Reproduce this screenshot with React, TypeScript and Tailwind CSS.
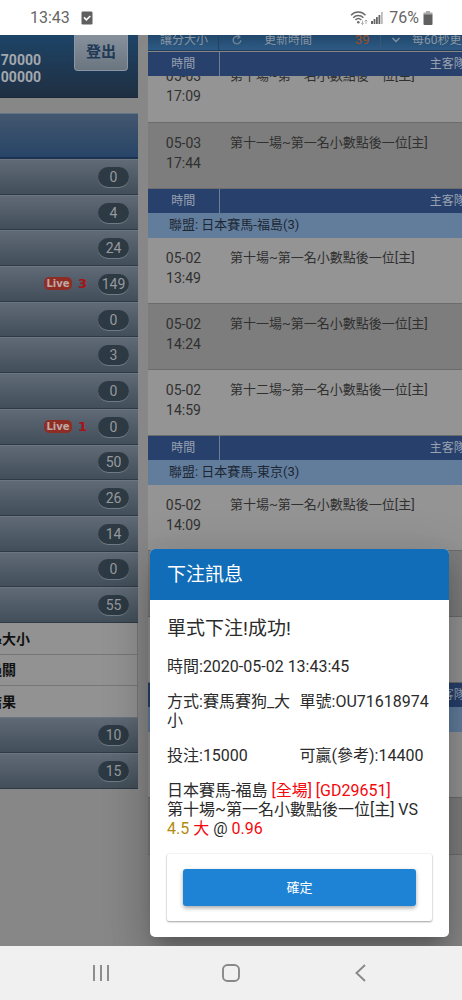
import { Fragment } from "react";

type MenuItem = { count: number; live?: number };
type Row = { date?: string; time?: string; teams?: string; short?: boolean };
type Group = { league: string; rows: Row[] };

const menuTop: MenuItem[] = [
  { count: 0 },
  { count: 4 },
  { count: 24 },
  { count: 149, live: 3 },
  { count: 0 },
  { count: 3 },
  { count: 0 },
  { count: 0, live: 1 },
  { count: 50 },
  { count: 26 },
  { count: 14 },
  { count: 0 },
  { count: 55 },
];
const menuBottom: MenuItem[] = [{ count: 10 }, { count: 15 }];

const firstRows: Row[] = [
  { date: "05-03", time: "17:09", teams: "第十場~第一名小數點後一位[主]" },
  { date: "05-03", time: "17:44", teams: "第十一場~第一名小數點後一位[主]" },
];

const groups: Group[] = [
  {
    league: "聯盟: 日本賽馬-福島(3)",
    rows: [
      { date: "05-02", time: "13:49", teams: "第十場~第一名小數點後一位[主]" },
      { date: "05-02", time: "14:24", teams: "第十一場~第一名小數點後一位[主]" },
      { date: "05-02", time: "14:59", teams: "第十二場~第一名小數點後一位[主]" },
    ],
  },
  {
    league: "聯盟: 日本賽馬-東京(3)",
    rows: [
      { date: "05-02", time: "14:09", teams: "第十場~第一名小數點後一位[主]" },
      {},
      {},
    ],
  },
  { league: "", rows: [{}, { short: true }] },
];

function MenuRow({ item }: { item: MenuItem }) {
  return (
    <li className="flex flex-1 items-center justify-end border-b border-[#2e3a46] border-t border-t-[#6b7580] bg-linear-to-b from-[#5f6a76] to-[#424e59] pr-[9px]">
      {item.live !== undefined && (
        <span className="mr-[11px] flex items-center gap-[6px] font-['DejaVu_Sans',sans-serif] font-bold">
          <span className="flex h-[13px] w-7 items-center justify-center rounded-[5px] bg-[#8f2d24] text-[10px] leading-none text-[#bfaaa7]">
            Live
          </span>
          <span className="text-[13px] leading-none text-[#a81116]">{item.live}</span>
        </span>
      )}
      <span className="flex h-5 w-[31px] items-center justify-center rounded-full bg-[#2d3943] text-sm leading-none text-[#969a9e] shadow-[0_1px_0_#6f7a84]">
        {item.count}
      </span>
    </li>
  );
}

function Columns() {
  return (
    <colgroup>
      <col className="w-[71px]" />
      <col />
    </colgroup>
  );
}

function HeadRow() {
  return (
    <tr className="h-6 bg-[#27406c] text-xs text-[#9aa3b1]">
      <th className="border-r border-[#6f7d94] p-0 font-normal">時間</th>
      <th className="p-0 font-normal">主客隊伍</th>
    </tr>
  );
}

function EventRow({ row, odd }: { row: Row; odd: boolean }) {
  const tone = odd ? "bg-[#7d7d7d]" : "bg-[#949494]";
  const height = row.short ? "h-[57px]" : "h-[66px]";
  return (
    <tr className={`${height} ${tone} border-b border-[#6c6c6c] align-top text-[#303030]`}>
      <td className="p-0 pt-[10px] text-center text-sm leading-5">
        {row.date}
        <br />
        {row.time}
      </td>
      <td className="p-0 pl-[11px] pt-[10px] text-[13px] leading-5">{row.teams}</td>
    </tr>
  );
}

function StatusBar() {
  return (
    <header className="flex h-[35px] shrink-0 items-center bg-white pl-[30px] pr-[29px] text-base text-[#666]">
      <span>13:43</span>
      <svg className="ml-[11px] h-[14px] w-[12px]" viewBox="0 0 12 14" aria-hidden="true">
        <rect x="0.5" y="0.5" width="11" height="13" rx="1.3" fill="#606060" />
        <path d="M3 6.4l2.4 2.4L9.3 5" fill="none" stroke="#fff" strokeWidth="1.6" />
      </svg>
      <span className="flex-1" />
      <svg className="h-[16px] w-[18px]" viewBox="0 0 18 16" fill="none" stroke="#6a6a6a" strokeWidth="1.4" aria-hidden="true">
        <path d="M1 5.2C5 1 11.500 1 15.500 5.200" />
        <path d="M3.200 7.700c3-3 7.200-3 10.200 0" />
        <path d="M5.400 10c1.700-1.700 4.200-1.700 5.900 0" />
        <circle cx="8.300" cy="12.300" r="1.300" fill="#6a6a6a" stroke="none" />
        <path d="M12.500 10.500v4m-1.300-1.300l1.300 1.300 1.300-1.300M16 14v-4m-1.300 1.300L16 10l1.300 1.300" stroke="#999" strokeWidth="0.800" />
      </svg>
      <svg className="ml-[3px] mr-[6px] h-[13px] w-[12px]" viewBox="0 0 12 13" fill="#666" aria-hidden="true">
        <path d="M0 10h2v3H0zM2.600 8h1.800v5H2.600zM5 6h1.800v7H5zM7.500 4h1.800v9H7.500z" />
        <path d="M10 1h1.800v12H10z" fill="#bbb" />
      </svg>
      <span>76%</span>
      <svg className="ml-[4px] h-[14px] w-[10px]" viewBox="0 0 10 14" aria-hidden="true">
        <path d="M3 0h4v1.500h2.500V4h-9V1.500H3z" fill="#aaa" />
        <path d="M0.500 3.500h9V13q0 1-1 1h-7q-1 0-1-1z" fill="#606060" />
      </svg>
    </header>
  );
}

function Sidebar() {
  return (
    <aside className="w-[138px] shrink-0">
      <div className="flex h-[63px] items-start justify-between overflow-hidden border-b border-[#1b2938] bg-linear-to-b from-[#1d4467] to-[#1f2f42] pr-[10px]">
        <div className="flex w-[41px] flex-col items-end pt-[17px] text-sm font-bold leading-[17px] text-[#a3a8ad]">
          <span>70000</span>
          <span>00000</span>
        </div>
        <button className="h-9 w-[54px] rounded-b-sm border border-t-0 border-[#8a96a3] bg-linear-to-b from-[#87919d] to-[#6b7580] text-[15px] font-bold text-[#203a56]">
          登出
        </button>
      </div>
      <div className="mt-[15px] h-[46px] border-b-2 border-t border-b-[#1b3350] border-t-[#60758a] bg-linear-to-b from-[#43576f] to-[#274467]" />
      <ul className="flex h-[464px] flex-col">
        {menuTop.map((item, i) => (
          <MenuRow key={i} item={item} />
        ))}
      </ul>
      <ul className="border-r border-[#777] text-sm font-bold text-[#111]">
        <li className="flex h-8 items-center border-b border-[#777] bg-[#929292]">
          <span className="flex w-[30px] justify-end whitespace-nowrap">&amp;大小</span>
        </li>
        <li className="flex h-[31px] items-center border-b border-[#777] bg-[#929292]">
          <span className="flex w-4 justify-end whitespace-nowrap">過關</span>
        </li>
        <li className="flex h-[31px] items-center bg-[#929292]">
          <span className="flex w-4 justify-end whitespace-nowrap">結果</span>
        </li>
      </ul>
      <ul className="flex h-[72px] flex-col">
        {menuBottom.map((item, i) => (
          <MenuRow key={i} item={item} />
        ))}
      </ul>
    </aside>
  );
}

function Odds() {
  return (
    <section className="min-w-0 flex-1 overflow-hidden">
      <div className="relative z-10">
        <div className="flex h-4 items-end overflow-hidden border-b border-[#1f3b5c] bg-linear-to-b from-[#22486b] to-[#2d5a85] text-xs leading-5 text-[#8896a3]">
          <span className="w-[71px] shrink-0 border-r border-[#24405e] pl-3">讓分大小</span>
          <svg className="mb-[5px] ml-[13px] mr-[22px] h-[10px] w-[10px] shrink-0" viewBox="0 0 10 10" fill="none" stroke="#6f8496" strokeWidth="1.400" aria-hidden="true">
            <path d="M8.800 5.300A3.800 3.800 0 1 1 6.500 1.600M6 0l1.800 2L5.500 3.700" />
          </svg>
          <span className="shrink-0">更新時間</span>
          <span className="ml-[43px] w-[26px] shrink-0 border-r border-[#345878] text-[13px] text-[#9a4f27]">39</span>
          <svg className="mb-[7px] ml-[11px] mr-3 h-[6px] w-[8px] shrink-0" viewBox="0 0 8 6" fill="none" stroke="#7d93a6" strokeWidth="1.400" aria-hidden="true">
            <path d="M0.500 1L4 4.500 7.500 1" />
          </svg>
          <select aria-label="更新頻率" className="h-5 w-20 shrink-0 appearance-none bg-transparent p-0 text-xs leading-5">
            <option>每60秒更新</option>
          </select>
        </div>
        <table className="mt-px w-[540px] table-fixed border-collapse">
          <Columns />
          <thead>
            <HeadRow />
          </thead>
        </table>
      </div>
      <div className="overflow-hidden">
        <table className="-mt-5 w-[540px] table-fixed border-collapse">
          <Columns />
          <tbody>
            {firstRows.map((row, i) => (
              <EventRow key={i} row={row} odd={i % 2 === 1} />
            ))}
          </tbody>
        </table>
      </div>
      <table className="w-[540px] table-fixed border-collapse">
        <Columns />
        <tbody>
          {groups.map((group, g) => (
            <Fragment key={g}>
              <HeadRow />
              <tr className="h-[25px] bg-[#627c9c] text-[13px] text-[#1c2733]">
                <td colSpan={2} className="p-0 pl-[21px] leading-6">
                  {group.league}
                </td>
              </tr>
              {group.rows.map((row, i) => (
                <EventRow key={i} row={row} odd={i % 2 === 1} />
              ))}
            </Fragment>
          ))}
        </tbody>
      </table>
    </section>
  );
}

function BetDialog() {
  return (
    <div className="absolute inset-0 z-20 flex items-end pb-[9px] pl-[150px] pr-[13px]">
      <div
        role="dialog"
        aria-labelledby="bet-title"
        className="w-full overflow-hidden rounded-[5px] bg-white text-base leading-[19px] text-[#2b2b2b] shadow-[0_11px_15px_-7px_rgba(0,0,0,0.2),0_24px_38px_3px_rgba(0,0,0,0.14),0_9px_46px_8px_rgba(0,0,0,0.12)]"
      >
        <h2 id="bet-title" className="flex h-[51px] items-center bg-[#116db7] px-[17px] text-[19px] text-white">
          下注訊息
        </h2>
        <div className="flex flex-col gap-4 px-[17px] pb-4 pt-[17px]">
          <h3 className="text-[19px] leading-6">單式下注!成功!</h3>
          <p>時間:2020-05-02 13:43:45</p>
          <div className="grid grid-cols-2">
            <p>方式:賽馬賽狗_大小</p>
            <p>單號:OU71618974</p>
          </div>
          <div className="grid grid-cols-2">
            <p>投注:15000</p>
            <p>可贏(參考):14400</p>
          </div>
          <p className="whitespace-nowrap">
            日本賽馬-福島 <span className="text-[#f5070c]">[全場] [GD29651]</span>
            <br />
            第十場~第一名小數點後一位[主] VS
            <br />
            <span className="text-[#b28a0e]">4.5</span> <span className="text-[#f5070c]">大</span> @{" "}
            <span className="text-[#f5070c]">0.96</span>
          </p>
          <div className="rounded-xs px-4 py-[15px] shadow-[0_1px_2px_rgba(0,0,0,0.35),0_0_2px_rgba(0,0,0,0.12)]">
            <button className="h-[37px] w-full rounded-[3px] bg-[#1f83d5] text-[13px] text-white shadow-[0_2px_4px_rgba(0,0,0,0.35)]">
              確定
            </button>
          </div>
        </div>
      </div>
    </div>
  );
}

function NavBar() {
  return (
    <nav className="flex h-[54px] shrink-0 items-center justify-around bg-[#f0f0f0] px-9 text-[#888]">
      <button aria-label="最近" className="flex w-5 justify-center">
        <svg className="h-5 w-5" viewBox="0 0 20 20" fill="none" stroke="currentColor" strokeWidth="1.900" aria-hidden="true">
          <path d="M3 2v16M10 2v16M17 2v16" />
        </svg>
      </button>
      <button aria-label="主畫面" className="flex w-5 justify-center">
        <svg className="h-5 w-5" viewBox="0 0 20 20" fill="none" stroke="currentColor" strokeWidth="1.900" aria-hidden="true">
          <rect x="2" y="2" width="16" height="16" rx="4.500" />
        </svg>
      </button>
      <button aria-label="返回" className="flex w-5 justify-center">
        <svg className="h-5 w-5" viewBox="0 0 20 20" fill="none" stroke="currentColor" strokeWidth="1.900" aria-hidden="true">
          <path d="M14 2L5.500 10l8.500 8" />
        </svg>
      </button>
    </nav>
  );
}

export default function App() {
  return (
    <div className="flex min-h-screen flex-col overflow-hidden font-['Roboto','Noto_Sans_CJK_TC',sans-serif]">
      <StatusBar />
      <main className="relative flex flex-1 items-start gap-[10px] overflow-hidden bg-[#878787]">
        <Sidebar />
        <Odds />
        <BetDialog />
      </main>
      <NavBar />
    </div>
  );
}
